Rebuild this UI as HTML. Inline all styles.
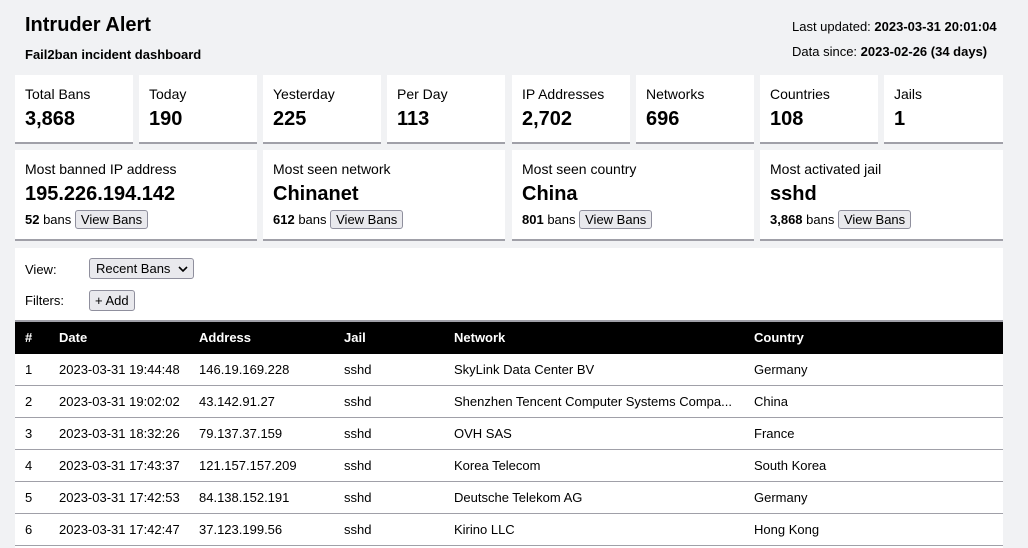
<!DOCTYPE html>
<html><head><style>
body{margin:0;background:#f1f2f4;font-family:"Liberation Sans",sans-serif;color:#000;width:1028px;height:542px;overflow:hidden;position:relative}
.abs{position:absolute}
.card{position:absolute;background:#fff;border-bottom:2px solid #a0a0a8;box-sizing:border-box;padding:11px 10px}
.lbl{font-size:14px}
.big{font-size:20px;font-weight:bold;margin-top:6px}
.sub{font-size:13px;margin-top:4px}
.btn{display:inline-block;border:1px solid #8f8f9d;background:#e9e9ed;border-radius:3px;font-size:13px;padding:1px 5px;}
table{border-collapse:collapse;font-size:13px;table-layout:fixed}
td,th{text-align:left;padding:0 0 0 10px;height:31px;border-bottom:1px solid #a0a0a8;white-space:nowrap;overflow:hidden}
th{background:#000;color:#fff;font-weight:bold;height:31px;font-size:13px;border-bottom:1px solid #000}
</style></head><body>
<div class="abs" style="left:25px;top:14px;font-size:20px;font-weight:bold">Intruder Alert</div>
<div class="abs" style="left:25px;top:47px;font-size:13px;font-weight:bold">Fail2ban incident dashboard</div>
<div class="abs" style="left:792px;top:19px;font-size:13px">Last updated: <b>2023-03-31 20:01:04</b></div>
<div class="abs" style="left:792px;top:44px;font-size:13px">Data since: <b>2023-02-26 (34 days)</b></div>

<div class="card" style="left:15px;top:75px;width:118px;height:69px"><div class="lbl">Total Bans</div><div class="big">3,868</div></div>
<div class="card" style="left:139px;top:75px;width:118px;height:69px"><div class="lbl">Today</div><div class="big">190</div></div>
<div class="card" style="left:263px;top:75px;width:118px;height:69px"><div class="lbl">Yesterday</div><div class="big">225</div></div>
<div class="card" style="left:387px;top:75px;width:118px;height:69px"><div class="lbl">Per Day</div><div class="big">113</div></div>
<div class="card" style="left:512px;top:75px;width:118px;height:69px"><div class="lbl">IP Addresses</div><div class="big">2,702</div></div>
<div class="card" style="left:636px;top:75px;width:118px;height:69px"><div class="lbl">Networks</div><div class="big">696</div></div>
<div class="card" style="left:760px;top:75px;width:118px;height:69px"><div class="lbl">Countries</div><div class="big">108</div></div>
<div class="card" style="left:884px;top:75px;width:119px;height:69px"><div class="lbl">Jails</div><div class="big">1</div></div>

<div class="card" style="left:15px;top:150px;width:242px;height:91px"><div class="lbl">Most banned IP address</div><div class="big">195.226.194.142</div><div class="sub"><b>52</b> bans <span class="btn">View Bans</span></div></div>
<div class="card" style="left:263px;top:150px;width:242px;height:91px"><div class="lbl">Most seen network</div><div class="big">Chinanet</div><div class="sub"><b>612</b> bans <span class="btn">View Bans</span></div></div>
<div class="card" style="left:512px;top:150px;width:242px;height:91px"><div class="lbl">Most seen country</div><div class="big">China</div><div class="sub"><b>801</b> bans <span class="btn">View Bans</span></div></div>
<div class="card" style="left:760px;top:150px;width:243px;height:91px"><div class="lbl">Most activated jail</div><div class="big">sshd</div><div class="sub"><b>3,868</b> bans <span class="btn">View Bans</span></div></div>

<div class="abs" style="left:15px;top:248px;width:988px;height:300px;background:#fff">
<div class="abs" style="left:10px;top:14px;font-size:13px">View:</div>
<div class="abs btn" style="left:74px;top:10px;padding:2px 5px 2px 6px">Recent Bans &nbsp;<svg width="10" height="7" viewBox="0 0 10 7"><path d="M1 1l4 4 4-4" stroke="#000" stroke-width="1.6" fill="none"/></svg></div>
<div class="abs" style="left:10px;top:45px;font-size:13px">Filters:</div>
<div class="abs btn" style="left:74px;top:42px;padding:2px 5px">+ Add</div>
<div class="abs" style="left:0;top:72px;width:988px;height:2px;background:#a0a0a8"></div>
<table class="abs" style="left:0;top:74px;width:988px">
<colgroup><col style="width:34px"><col style="width:140px"><col style="width:145px"><col style="width:110px"><col style="width:300px"><col></colgroup>
<tr><th>#</th><th>Date</th><th>Address</th><th>Jail</th><th>Network</th><th>Country</th></tr>
<tr><td>1</td><td>2023-03-31 19:44:48</td><td>146.19.169.228</td><td>sshd</td><td>SkyLink Data Center BV</td><td>Germany</td></tr>
<tr><td>2</td><td>2023-03-31 19:02:02</td><td>43.142.91.27</td><td>sshd</td><td>Shenzhen Tencent Computer Systems Compa...</td><td>China</td></tr>
<tr><td>3</td><td>2023-03-31 18:32:26</td><td>79.137.37.159</td><td>sshd</td><td>OVH SAS</td><td>France</td></tr>
<tr><td>4</td><td>2023-03-31 17:43:37</td><td>121.157.157.209</td><td>sshd</td><td>Korea Telecom</td><td>South Korea</td></tr>
<tr><td>5</td><td>2023-03-31 17:42:53</td><td>84.138.152.191</td><td>sshd</td><td>Deutsche Telekom AG</td><td>Germany</td></tr>
<tr><td>6</td><td>2023-03-31 17:42:47</td><td>37.123.199.56</td><td>sshd</td><td>Kirino LLC</td><td>Hong Kong</td></tr>
</table>
</div>
</body></html>
